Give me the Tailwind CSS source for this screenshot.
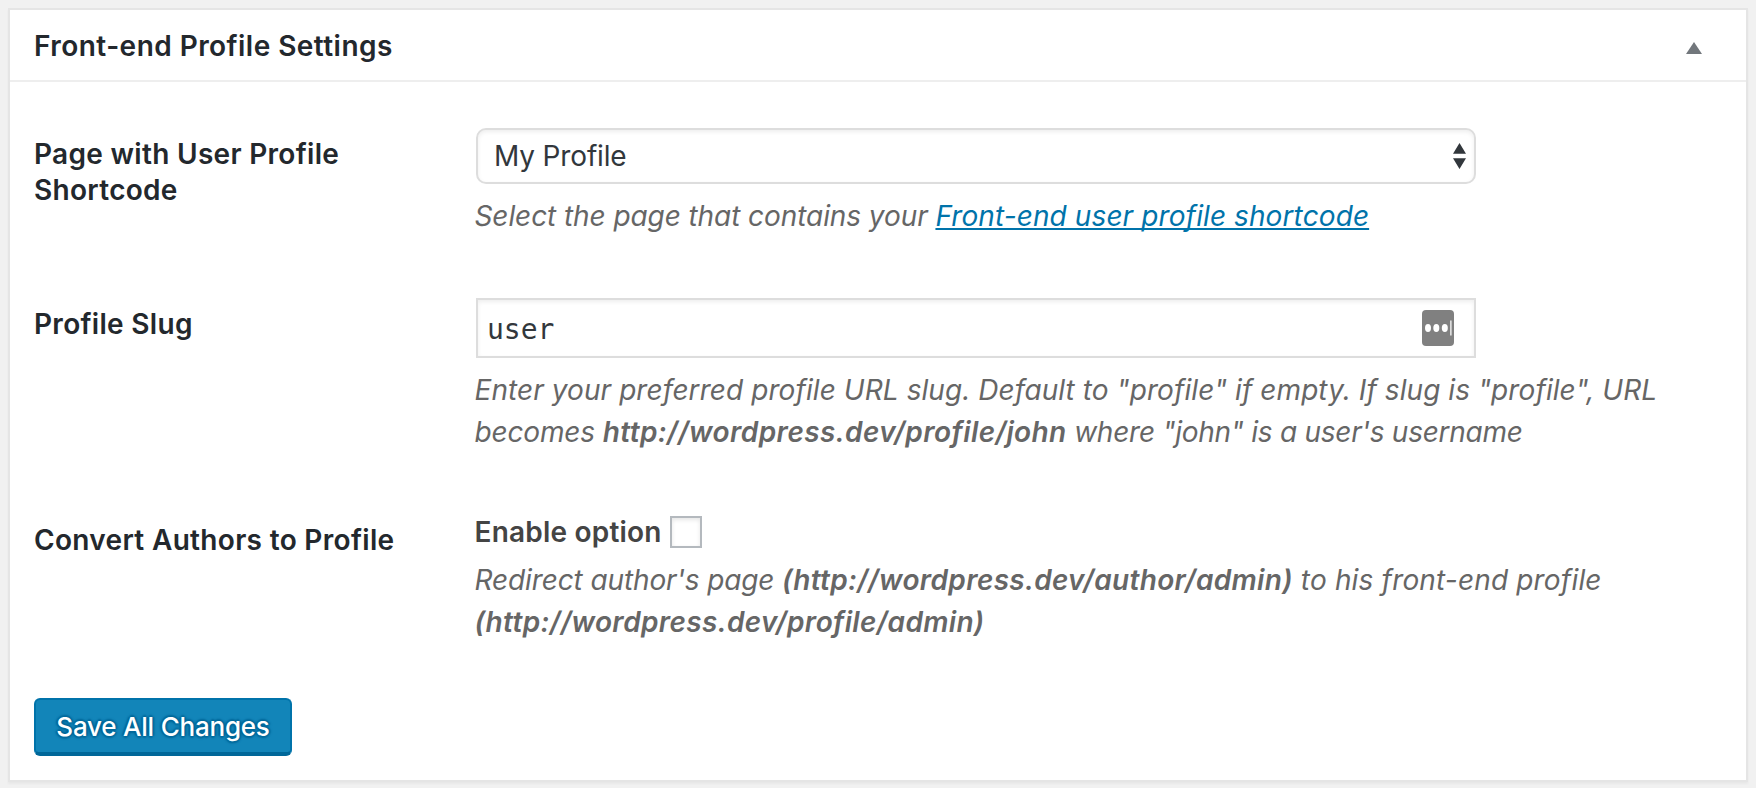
<!DOCTYPE html>
<html lang="en">
<head>
<meta charset="utf-8">
<title>Front-end Profile Settings</title>
<script src="https://cdn.jsdelivr.net/npm/@tailwindcss/browser@4"></script>
</head>
<body class="h-[788px] overflow-hidden bg-[#f1f1f1] p-2 font-['Inter',sans-serif] text-[28px] leading-[42px] text-[#444]">
<main class="h-[774px] w-[1740px] border-2 border-[#e5e5e5] bg-white shadow-[0_2px_2px_rgba(0,0,0,0.04)]">
  <header class="flex h-[72px] items-center justify-between border-b-2 border-[#eee] pt-[2px] pr-[44px] pl-6">
    <h2 class="font-semibold tracking-[0.45px] text-[#23282d]">Front-end Profile Settings</h2>
    <svg class="mt-1 h-3 w-4 fill-[#72777c]" viewBox="0 0 16 12"><path d="M8 0l8 12H0z"/></svg>
  </header>
  <form class="px-6">
    <div class="grid h-[170px] grid-cols-[442px_1fr] pt-[46px]">
      <h3 class="pt-[8px] leading-9 font-semibold tracking-[0.3px] text-[#23282d]">Page with User Profile<br>Shortcode</h3>
      <div>
        <div class="flex h-14 w-[1000px] items-center justify-between rounded-[10px] border-2 border-[#ddd] pr-2 pl-4 text-[#32373c] shadow-[inset_0_2px_4px_rgba(0,0,0,0.07)]">
          <span class="tracking-[-0.15px]">My Profile</span>
          <svg class="h-[26px] w-[13px] fill-[#32373c]" viewBox="0 0 13 26"><path d="M6.500 0L13 10.700H0zM6.500 26L13 15.300H0z"/></svg>
        </div>
        <p class="mt-[11px] -ml-[1.5px] text-[#666] italic"><span class="tracking-[-0.08px]">Select the page that contains your </span><a class="tracking-[0.1px] text-[#0073aa] underline decoration-2 underline-offset-2 [text-decoration-skip-ink:none]">Front-end user profile shortcode</a></p>
      </div>
    </div>
    <div class="grid h-[214px] grid-cols-[442px_1fr] pt-[46px]">
      <h3 class="pt-[8px] leading-9 font-semibold tracking-[0.3px] text-[#23282d]">Profile Slug</h3>
      <div>
        <div class="flex h-[60px] w-[1000px] items-center justify-between border-2 border-[#ddd] pr-5 pl-[9px] font-['DejaVu_Sans_Mono',monospace] text-[#32373c] shadow-[inset_0_2px_4px_rgba(0,0,0,0.07)]">
          <span class="pt-1">user</span>
          <svg class="h-9 w-8" viewBox="0 0 32 36"><rect width="32" height="36" rx="4" fill="#808080"/><g fill="#fff"><ellipse cx="6" cy="18" rx="3" ry="4"/><ellipse cx="14.300" cy="18" rx="3" ry="4"/><ellipse cx="22.800" cy="18" rx="3" ry="4"/><path fill="#ddd" d="M28 10.500h1.700v15H28z"/></g></svg>
        </div>
        <p class="mt-[11px] -ml-[1.5px] text-[#666] italic"><span class="tracking-[0.07px]">Enter your preferred profile URL slug. Default to "profile" if empty. If slug is "profile", URL</span><br><span class="tracking-[-0.15px]">becomes </span><b class="font-semibold tracking-[0.38px]">http://wordpress.dev/profile/john</b><span class="tracking-[-0.25px]"> where "john" is a user's username</span></p>
      </div>
    </div>
    <div class="grid h-[232px] grid-cols-[442px_1fr] pt-[50px]">
      <h3 class="pt-[6px] leading-9 font-semibold tracking-[0.32px] text-[#23282d]">Convert Authors to Profile</h3>
      <div>
        <label class="-ml-[1.5px] flex h-8 items-center gap-2 font-semibold"><span class="w-[187.5px] tracking-[0.2px]">Enable option</span><i class="size-8 border-2 border-[#b4b9be] shadow-[inset_0_2px_4px_rgba(0,0,0,0.1)]"></i></label>
        <p class="mt-[11px] -ml-[1.5px] text-[#666] italic"><span class="tracking-[-0.12px]">Redirect author's page </span><b class="font-semibold tracking-[0.3px]">(http://wordpress.dev/author/admin)</b><span class="tracking-[0.16px]"> to his front-end profile</span><br><b class="font-semibold tracking-[0.32px]">(http://wordpress.dev/profile/admin)</b></p>
      </div>
    </div>
    <button type="button" class="flex h-[58px] w-[258px] items-center justify-center rounded-[6px] border-2 border-b-4 border-[#0073aa] border-b-[#006799] bg-[#1285b9] pt-[2px] text-[26px] font-medium tracking-[-0.22px] text-white [text-shadow:0_-2px_2px_#006799,2px_0_2px_#006799,0_2px_2px_#006799,-2px_0_2px_#006799]">Save All Changes</button>
  </form>
</main>
</body>
</html>
